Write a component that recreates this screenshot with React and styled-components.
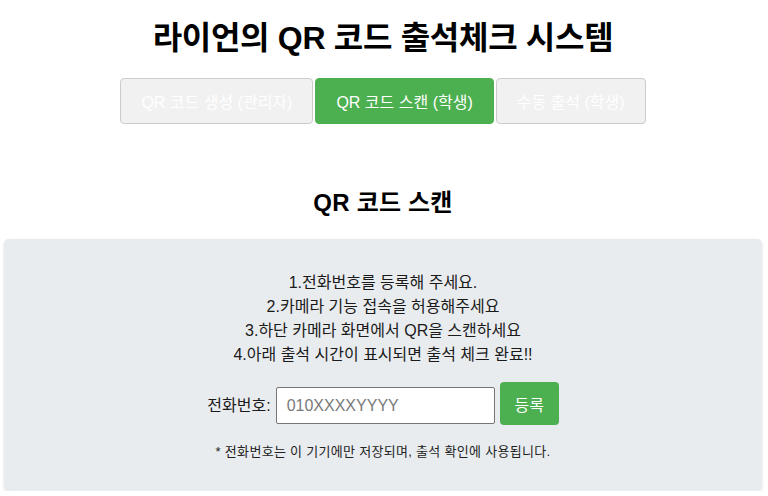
import React from "react";
import styled, { createGlobalStyle } from "styled-components";

const Global = createGlobalStyle`
  html, body { margin: 0; padding: 0; background: #ffffff; }
  body { font-family: "Liberation Sans", "Noto Sans CJK KR", sans-serif; color: #111; }
  * { box-sizing: border-box; }
`;

const Page = styled.div`
  display: flex;
  flex-direction: column;
  align-items: center;
  padding: 0 6px 0 4px;
`;

const Title = styled.h1`
  margin: 18px 0 0;
  font-size: 32px;
  line-height: 40px;
  font-weight: 700;
  letter-spacing: -0.3px;
  color: #000;
`;

const Tabs = styled.div`
  display: flex;
  gap: 2px;
  margin-top: 20px;
`;

const Tab = styled.button`
  font-family: inherit;
  font-size: 16px;
  height: 46px;
  padding: 0 20px;
  border-radius: 4px;
  border: 1px solid ${(p) => (p.$active ? "#4caf50" : "#cccccc")};
  background: ${(p) => (p.$active ? "#4caf50" : "#f1f1f1")};
  color: #ffffff;
  cursor: pointer;
`;

const Subtitle = styled.h2`
  margin: 64px 0 0;
  font-size: 24px;
  line-height: 30px;
  font-weight: 700;
  letter-spacing: 0.2px;
  color: #000;
`;

const Panel = styled.div`
  align-self: stretch;
  margin-top: 21px;
  padding: 32px 20px 30px;
  background: #e9ecef;
  border-radius: 5px;
  box-shadow: 0 1px 3px rgba(0, 0, 0, 0.12);
  display: flex;
  flex-direction: column;
  align-items: center;
`;

const Steps = styled.div`
  text-align: center;
  font-size: 16px;
  line-height: 24px;
  color: #1a1a1a;
`;

const Row = styled.div`
  display: flex;
  align-items: center;
  gap: 5px;
  margin-top: 15px;
`;

const Label = styled.label`
  font-size: 16px;
  color: #1a1a1a;
`;

const Input = styled.input`
  width: 219px;
  height: 37px;
  margin-top: 4px;
  padding: 0 10px;
  font-family: inherit;
  font-size: 16px;
  border: 1px solid #767676;
  border-radius: 2px;
  background: #fff;
  &::placeholder { color: #7a7a7a; }
`;

const Button = styled.button`
  width: 59px;
  height: 43px;
  border: none;
  border-radius: 4px;
  background: #4caf50;
  color: #fff;
  font-family: inherit;
  font-size: 16px;
  cursor: pointer;
`;

const Note = styled.p`
  margin: 18px 0 0;
  font-size: 13px;
  line-height: 18px;
  letter-spacing: 0.3px;
  color: #222;
`;

export default function App() {
  return (
    <>
      <Global />
      <Page>
        <Title>라이언의 QR 코드 출석체크 시스템</Title>
        <Tabs>
          <Tab>QR 코드 생성 (관리자)</Tab>
          <Tab $active>QR 코드 스캔 (학생)</Tab>
          <Tab>수동 출석 (학생)</Tab>
        </Tabs>
        <Subtitle>QR 코드 스캔</Subtitle>
        <Panel>
          <Steps>
            <div>1.전화번호를 등록해 주세요.</div>
            <div>2.카메라 기능 접속을 허용해주세요</div>
            <div>3.하단 카메라 화면에서 QR을 스캔하세요</div>
            <div>4.아래 출석 시간이 표시되면 출석 체크 완료!!</div>
          </Steps>
          <Row>
            <Label htmlFor="phone">전화번호:</Label>
            <Input id="phone" placeholder="010XXXXYYYY" />
            <Button>등록</Button>
          </Row>
          <Note>* 전화번호는 이 기기에만 저장되며, 출석 확인에 사용됩니다.</Note>
        </Panel>
      </Page>
    </>
  );
}
